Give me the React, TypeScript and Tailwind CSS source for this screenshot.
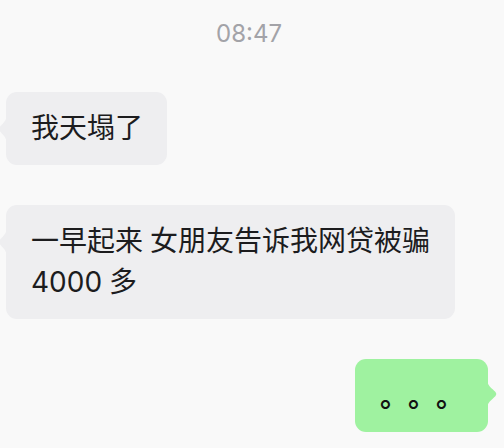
import React from "react";

const font = { fontFamily: '"Inter", "Noto Sans CJK SC", sans-serif' };

function LeftTail({ color }: { color: string }) {
  return (
    <svg
      className="absolute left-[-7px] top-[22px]"
      width="8"
      height="30"
      viewBox="0 0 8 30"
    >
      <path
        d="M8 0 C8 8 1 11 0.5 14 Q0 15 0.5 16 C1 19 8 22 8 30 Z"
        fill={color}
      />
    </svg>
  );
}

function RightTail({ color }: { color: string }) {
  return (
    <svg
      className="absolute right-[-9px] top-[20px]"
      width="10"
      height="30"
      viewBox="0 0 10 30"
    >
      <path
        d="M0 0 C0 8 8 11 9 14 Q9.6 15 9 16 C8 19 0 22 0 30 Z"
        fill={color}
      />
    </svg>
  );
}

export default function App() {
  return (
    <div
      className="w-[504px] h-[448px] overflow-hidden bg-[#f9f9f9] flex flex-col"
      style={font}
    >
      <div className="pt-[18px] pr-[6px] text-center text-[24px] leading-[32px] text-[#a3a3a8]">
        08:47
      </div>

      <div className="mt-[42px] pl-[6px] flex">
        <div className="relative rounded-[11px] bg-[#eeeef0] pl-[25px] pr-[24px] py-[16px] text-[28px] leading-[41px] text-[#1c1c1e] whitespace-nowrap">
          <LeftTail color="#eeeef0" />
          我天塌了
        </div>
      </div>

      <div className="mt-[40px] pl-[6px] flex">
        <div className="relative rounded-[11px] bg-[#eeeef0] pl-[25px] pr-[25px] py-[16px] text-[28px] leading-[41px] text-[#1c1c1e] whitespace-nowrap [word-spacing:-1px]">
          <LeftTail color="#eeeef0" />
          一早起来 女朋友告诉我网贷被骗
          <br />
          4000 多
        </div>
      </div>

      <div className="mt-[40px] pr-[16px] flex justify-end">
        <div className="relative flex rounded-[11px] bg-[#9ff2a0] pl-[25px] pr-[24px] py-[16px] text-[28px] leading-[41px] text-[#111111] font-bold whitespace-nowrap">
          <RightTail color="#9ff2a0" />
          <span className="inline-block w-[28px]" style={{ fontFamily: '"Noto Sans CJK SC", sans-serif' }}>。</span>
          <span className="inline-block w-[28px]" style={{ fontFamily: '"Noto Sans CJK SC", sans-serif' }}>。</span>
          <span className="inline-block w-[28px]" style={{ fontFamily: '"Noto Sans CJK SC", sans-serif' }}>。</span>
        </div>
      </div>
    </div>
  );
}
